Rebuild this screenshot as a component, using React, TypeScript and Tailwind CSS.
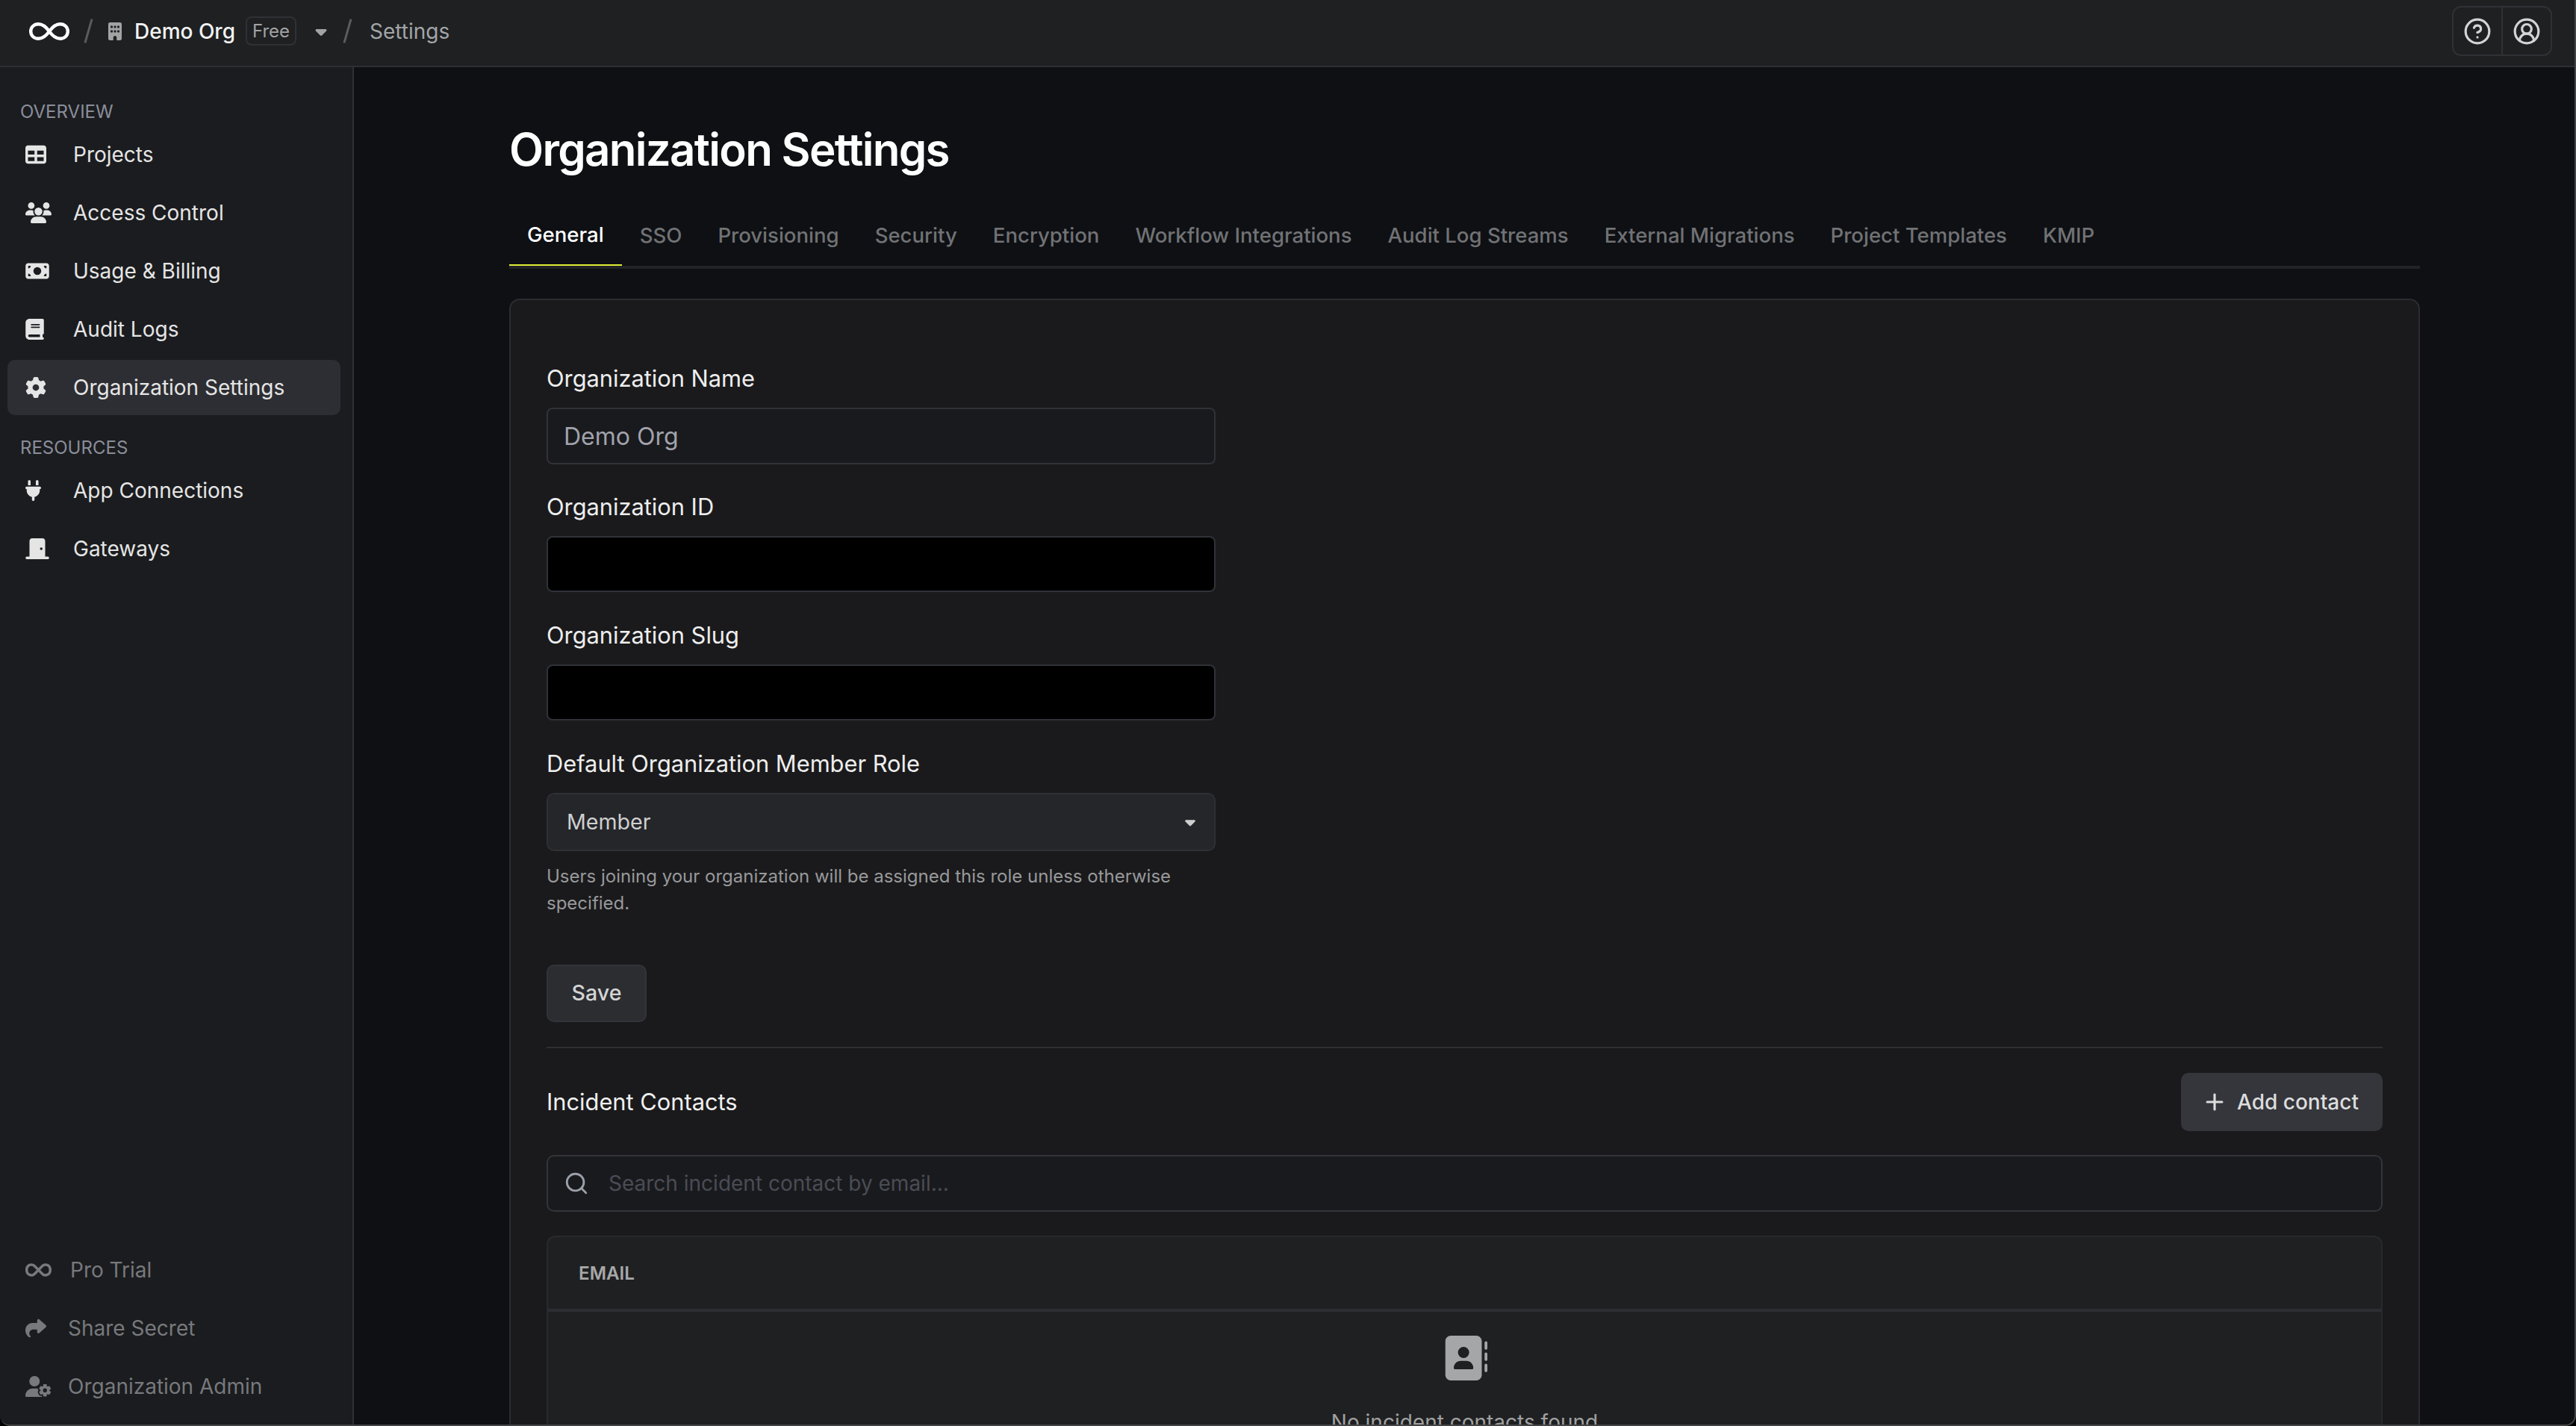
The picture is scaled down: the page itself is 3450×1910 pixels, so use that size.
import type { ReactNode } from "react";
import { CircleHelp, CircleUserRound, Plus, Search } from "lucide-react";
import {
  FaAddressBook,
  FaBook,
  FaBuilding,
  FaCaretDown,
  FaDoorClosed,
  FaGear,
  FaInfinity,
  FaMoneyBill,
  FaPlug,
  FaShare,
  FaTable,
  FaUserGear,
  FaUsers,
} from "react-icons/fa6";

const tabs = [
  "SSO",
  "Provisioning",
  "Security",
  "Encryption",
  "Workflow Integrations",
  "Audit Log Streams",
  "External Migrations",
  "Project Templates",
  "KMIP",
];

function Logo() {
  return (
    <svg width="54" height="24" viewBox="0 0 54 24" fill="none" stroke="white" strokeWidth="4.400">
      <path d="M27 12C22 5 18 2.200 12.500 2.200 6.500 2.200 2.200 6.500 2.200 12s4.300 9.800 10.300 9.800C18 21.800 22 19 27 12c5-7 9-9.800 14.500-9.800 6 0 10.300 4.300 10.300 9.800s-4.300 9.800-10.300 9.800C36 21.800 32 19 27 12Z" />
    </svg>
  );
}

function NavItem({ icon, label, active }: { icon: ReactNode; label: string; active?: boolean }) {
  return (
    <div
      className={
        "ml-[10px] flex h-[74px] w-[446px] items-center rounded-[10px] pl-[24px] text-[28px] text-[#e5e5e5] " +
        (active ? "bg-[#2d2e33]" : "")
      }
    >
      <div className="flex w-[64px] items-center text-[#e5e5e5]">{icon}</div>
      {label}
    </div>
  );
}

function BottomItem({ icon, label, iconW }: { icon: ReactNode; label: string; iconW: string }) {
  return (
    <div className="ml-[10px] flex h-[74px] w-[446px] items-center pl-[24px] text-[28px] text-[#77797c]">
      <div className={"flex items-center " + iconW}>{icon}</div>
      {label}
    </div>
  );
}

function SectionLabel({ children }: { children: ReactNode }) {
  return (
    <div className="ml-[27px] flex h-[34px] items-center text-[24px] text-[#8a8e9a]">
      {children}
    </div>
  );
}

function FieldLabel({ children }: { children: ReactNode }) {
  return <div className="mb-[19px] flex h-[40px] items-center text-[30.800px] text-[#eeeeee]">{children}</div>;
}

export default function App() {
  return (
    <div className="h-[1910px] w-[3450px] overflow-hidden bg-black font-['Inter',sans-serif]">
      <div className="flex h-[1910px] w-[3450px] flex-col overflow-hidden rounded-b-[14px] border-r-2 border-b-2 border-[#434446] bg-[#0e1014]">
        <header className="flex h-[90px] shrink-0 items-center border-b-2 border-[#2d2f33] bg-[#1e2022] pb-[5px] pl-[39px] pr-[30px]">
          <Logo />
          <div className="mx-[24px] h-[33px] w-[3px] rotate-[16deg] bg-[#5a5c5f]" />
          <FaBuilding className="ml-[1px] h-[24px] w-[18px] text-[#a3a3a3]" />
          <span className="ml-[17px] text-[28px] font-medium text-[#f2f2f2]">Demo Org</span>
          <span className="ml-[14px] flex h-[39px] w-[68px] items-center justify-center rounded-[8px] border-2 border-[#2f3135] text-[24px] text-[#a3a3a3]">
            Free
          </span>
          <FaCaretDown className="ml-[24px] h-[24px] w-[18px] text-[#a3a3a3]" />
          <div className="ml-[25px] mr-[28px] h-[33px] w-[3px] rotate-[16deg] bg-[#5a5c5f]" />
          <span className="text-[28px] text-[#a3a5a7]">Settings</span>
          <div className="ml-auto flex h-[67px] w-[134px] rounded-[12px] border-2 border-[#2f3135]">
            <div className="flex flex-1 items-center justify-center border-r-2 border-[#2f3135]">
              <CircleHelp size={38} strokeWidth={2} className="text-[#d4d4d4]" />
            </div>
            <div className="flex flex-1 items-center justify-center">
              <CircleUserRound size={38} strokeWidth={2} className="text-[#d4d4d4]" />
            </div>
          </div>
        </header>

        <div className="flex min-h-0 flex-1">
          <aside className="flex w-[474px] shrink-0 flex-col justify-between border-r-2 border-[#2f3033] bg-[#1b1c1f] pb-[14px] pt-[43px]">
            <div>
              <SectionLabel>OVERVIEW</SectionLabel>
              <div className="mt-[3px] flex flex-col gap-[4px]">
                <NavItem icon={<FaTable className="h-[28px] w-[28px]" />} label="Projects" />
                <NavItem icon={<FaUsers className="h-[28px] w-[35px]" />} label="Access Control" />
                <NavItem icon={<FaMoneyBill className="h-[28px] w-[32px]" />} label="Usage & Billing" />
                <NavItem icon={<FaBook className="h-[28px] w-[25px]" />} label="Audit Logs" />
                <NavItem icon={<FaGear className="h-[28px] w-[28px]" />} label="Organization Settings" active />
              </div>
              <div className="mt-[27px]">
                <SectionLabel>RESOURCES</SectionLabel>
              </div>
              <div className="mt-[3px] flex flex-col gap-[4px]">
                <NavItem icon={<FaPlug className="h-[28px] w-[21px]" />} label="App Connections" />
                <NavItem icon={<FaDoorClosed className="h-[28px] w-[32px]" />} label="Gateways" />
              </div>
            </div>
            <div className="flex flex-col gap-[4px]">
              <BottomItem icon={<FaInfinity className="h-[28px] w-[35px]" />} iconW="w-[60px]" label="Pro Trial" />
              <BottomItem icon={<FaShare className="h-[28px] w-[28px]" />} iconW="w-[57px]" label="Share Secret" />
              <BottomItem icon={<FaUserGear className="h-[28px] w-[35px]" />} iconW="w-[57px]" label="Organization Admin" />
            </div>
          </aside>

          <main className="min-w-0 flex-1 overflow-hidden pl-[208px] pt-[70px]">
            <div className="w-[2559px]">
              <h1 className="flex h-[80px] items-center text-[60px] font-semibold tracking-[-1.700px] text-white">
                Organization Settings
              </h1>
              <div className="mt-[36px] flex border-b-4 border-[#222327]">
                <div className="-mb-[4px] flex h-[80px] items-center border-b-2 border-[#e0ed34] px-[24px] text-[27.550px] font-medium text-white">
                  General
                </div>
                {tabs.map((t) => (
                  <div key={t} className="flex h-[80px] items-center px-[24px] text-[27.550px] font-medium text-[#717274]">
                    {t}
                  </div>
                ))}
              </div>

              <section className="mt-[40px] rounded-t-[14px] border-2 border-[#2b2c30] bg-[#1a1a1c] px-[48px] pt-[85px]">
                <FieldLabel>Organization Name</FieldLabel>
                <input
                  readOnly
                  defaultValue="Demo Org"
                  className="block h-[76px] w-[896px] rounded-[8px] border-2 border-[#303238] bg-[#191a1d] px-[21px] text-[32px] text-[#a1a3ad] outline-none"
                />
                <div className="mt-[37px]">
                  <FieldLabel>Organization ID</FieldLabel>
                </div>
                <div className="h-[75px] w-[896px] rounded-[8px] border-2 border-[#303238] bg-black" />
                <div className="mt-[38px]">
                  <FieldLabel>Organization Slug</FieldLabel>
                </div>
                <div className="mt-[3px] h-[75px] w-[896px] rounded-[8px] border-2 border-[#303238] bg-black" />
                <div className="mt-[38px]">
                  <FieldLabel>Default Organization Member Role</FieldLabel>
                </div>
                <div className="flex h-[78px] w-[896px] items-center justify-between rounded-[10px] border-2 border-[#2e3034] bg-[#24262a] pl-[25px] pr-[24px] text-[28.600px] text-[#cfcfcf]">
                  Member
                  <FaCaretDown className="h-[22px] w-[16px] text-[#cfcfcf]" />
                </div>
                <p className="mt-[16px] w-[896px] text-[24px] leading-[36px] text-[#98999b]">
                  Users joining your organization will be assigned this role unless otherwise specified.
                </p>
                <button className="mt-[64px] block h-[77px] w-[134px] rounded-[10px] border-2 border-[#32343a] bg-[#2b2d31] text-[28.600px] font-medium text-[#d4d4d4]">
                  Save
                </button>
                <div className="mt-[33px] h-[2px] bg-[#2d2f33]" />

                <div className="mt-[33px] flex h-[78px] items-center justify-between">
                  <div className="text-[30.800px] text-[#f0f0f0]">Incident Contacts</div>
                  <button className="flex h-[78px] w-[270px] items-center justify-center gap-[13px] rounded-[10px] bg-[#34363b] pr-[4px] text-[28px] font-medium text-[#dddddd]">
                    <Plus size={34} strokeWidth={2.200} />
                    Add contact
                  </button>
                </div>
                <div className="mt-[32px] flex h-[76px] items-center rounded-[10px] border-2 border-[#33353b] bg-[#191a1d] pl-[21px]">
                  <Search size={34} strokeWidth={2} className="text-[#9aa0a8]" />
                  <input
                    readOnly
                    placeholder="Search incident contact by email..."
                    className="ml-[26px] flex-1 bg-transparent text-[28px] text-[#cfcfcf] outline-none placeholder:text-[#4a4c55]"
                  />
                </div>
                <div className="mt-[32px] h-[500px] rounded-t-[12px] border-2 border-[#28292d] bg-[#1f2022]">
                  <div className="flex h-[100px] items-center border-b-4 border-[#2d2e33] pl-[41px] pt-[2px] text-[24.200px] font-semibold text-[#a8a8a8]">
                    EMAIL
                  </div>
                  <div className="flex flex-col items-center pt-[30px]">
                    <FaAddressBook className="h-[64px] w-[60px] text-[#a5a6a8]" />
                    <div className="mt-[33px] text-[28px] text-[#a0a0a0]">No incident contacts found</div>
                  </div>
                </div>
              </section>
            </div>
          </main>
        </div>
      </div>
    </div>
  );
}
